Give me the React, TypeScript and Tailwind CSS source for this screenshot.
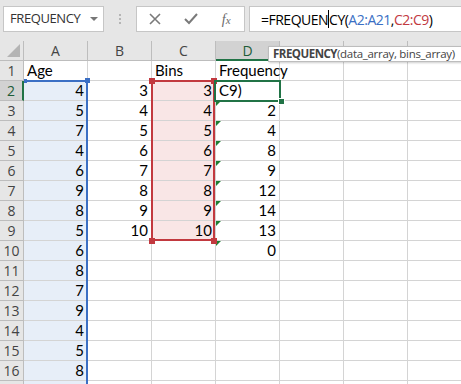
import React from "react"

const cols = ["A", "B", "C", "D", "E", "F", "G"]

// values by row (row 1..17), columns A..D
const colA = ["Age", "4", "5", "7", "4", "6", "9", "8", "5", "6", "8", "7", "9", "4", "5", "8", ""]
const colB = ["", "3", "4", "5", "6", "7", "8", "9", "10"]
const colC = ["Bins", "3", "4", "5", "6", "7", "8", "9", "10"]
const colD = ["Frequency", "C9)", "2", "4", "8", "9", "12", "14", "13", "0"]

const getCell = (row: number, col: number) => {
  const i = row - 1
  if (col === 0) return colA[i] ?? ""
  if (col === 1) return colB[i] ?? ""
  if (col === 2) return colC[i] ?? ""
  if (col === 3) return colD[i] ?? ""
  return ""
}

const Cell = ({ row, col }: { row: number; col: number }) => {
  const value = getCell(row, col)
  const isText = row === 1 || (row === 2 && col === 3)
  let bg = "bg-white"
  if (col === 0 && row >= 2) bg = "bg-[#e7eef8]"
  if (col === 2 && row >= 2 && row <= 9) bg = "bg-[#f9e6e6]"
  const hasFlag = col === 3 && row >= 3 && row <= 10
  return (
    <div
      className={`relative h-[20px] w-[64px] shrink-0 border-r border-b border-[#d4d4d4] ${bg} flex items-end px-[3px] text-[15px] leading-[19px] text-black ${isText ? "justify-start" : "justify-end"}`}
    >
      {hasFlag && (
        <div className="absolute left-0 top-0 w-0 h-0 border-t-[5px] border-t-[#1e7e34] border-r-[5px] border-r-transparent" />
      )}
      <span className="relative z-10 whitespace-nowrap">{value}</span>
    </div>
  )
}

export default function App() {
  const rows = Array.from({ length: 17 }, (_, i) => i + 1)

  return (
    <div
      className="relative w-[461px] h-[384px] overflow-hidden bg-white"
      style={{ fontFamily: "Lato, 'Noto Sans', sans-serif" }}
    >
      {/* top bar */}
      <div
        className="h-[41px] bg-[#e6e6e6] flex items-start pt-[6px] pl-[3px]"
        style={{ fontFamily: "'Open Sans', 'Noto Sans', sans-serif" }}
      >
        <div className="w-[101px] h-[26px] bg-white border border-[#c6c6c6] flex items-center justify-between pl-[6px] pr-[5px] text-[13px] tracking-[-0.4px] text-[#333]">
          <span>FREQUENCY</span>
          <div className="w-0 h-0 border-l-[4px] border-r-[4px] border-t-[4px] border-l-transparent border-r-transparent border-t-[#777]" />
        </div>
        <div className="w-[32px] h-[26px] flex flex-col items-center justify-center gap-[2px]">
          <div className="w-[2px] h-[2px] bg-[#b5b5b5]" />
          <div className="w-[2px] h-[2px] bg-[#b5b5b5]" />
          <div className="w-[2px] h-[2px] bg-[#b5b5b5]" />
        </div>
        <div className="w-[109px] h-[26px] bg-white border border-[#c6c6c6] flex items-center">
          <div className="w-[36px] flex justify-center">
            <svg width="12" height="12" viewBox="0 0 12 12">
              <path d="M1 1 L11 11 M11 1 L1 11" stroke="#7a7a7a" strokeWidth="1.6" fill="none" />
            </svg>
          </div>
          <div className="w-[36px] flex justify-center">
            <svg width="14" height="12" viewBox="0 0 14 12">
              <path d="M1 6 L5 10 L13 1" stroke="#7a7a7a" strokeWidth="2" fill="none" />
            </svg>
          </div>
          <div className="w-[36px] flex justify-center">
            <span className="italic text-[14px] text-[#6a6a6a]" style={{ fontFamily: "'Liberation Serif', serif" }}>
              f<span className="text-[11px]">x</span>
            </span>
          </div>
        </div>
        <div className="ml-[4px] flex-1 h-[26px] bg-white border border-[#c6c6c6] border-r-0 flex items-center pl-[11px] text-[14px] tracking-[-0.5px] text-black">
          <span>=FREQUEN</span>
          <span className="inline-block w-[1px] h-[18px] bg-black" />
          <span>CY(</span>
          <span className="text-[#3b6fc4]">A2:A21</span>
          <span>,</span>
          <span className="text-[#c2393f]">C2:C9</span>
          <span>)</span>
        </div>
      </div>

      {/* column header */}
      <div className="flex h-[20px] bg-[#e6e6e6] text-[14px] text-[#444]" style={{ fontFamily: "'Open Sans', 'Noto Sans', sans-serif" }}>
        <div className="relative w-[24px] h-[20px] shrink-0 border-r border-b border-[#bdbdbd]">
          <div className="absolute right-[3px] bottom-[3px] w-0 h-0 border-l-[13px] border-l-transparent border-b-[13px] border-b-[#b4b4b4]" />
        </div>
        {cols.map((c) => (
          <div
            key={c}
            className={`w-[64px] h-[20px] shrink-0 flex items-center justify-center border-r border-[#bdbdbd] ${c === "D" ? "bg-[#d2d2d2] border-b-2 border-b-[#217346] text-[#1d5c37]" : "border-b border-b-[#bdbdbd]"}`}
          >
            {c}
          </div>
        ))}
      </div>

      {/* rows */}
      {rows.map((r) => (
        <div key={r} className="flex">
          <div
            className={`w-[24px] h-[20px] shrink-0 flex items-center justify-center text-[14px] border-b border-[#bdbdbd] ${r === 2 ? "bg-[#d2d2d2] border-r-2 border-r-[#217346] text-[#1d5c37]" : "bg-[#e6e6e6] border-r border-r-[#bdbdbd] text-[#444]"}`}
            style={{ fontFamily: "'Open Sans', 'Noto Sans', sans-serif" }}
          >
            {r}
          </div>
          {cols.map((_, ci) => (
            <Cell key={ci} row={r} col={ci} />
          ))}
        </div>
      ))}

      {/* blue range A2:A21 */}
      <div className="absolute left-[24px] top-[80px] w-[64px] h-[2px] bg-[#3b6fc4]" />
      <div className="absolute left-[86px] top-[80px] w-[2px] h-[320px] bg-[#3b6fc4]" />
      <div className="absolute left-[85px] top-[78px] w-[5px] h-[5px] bg-[#3b6fc4]" />
      <div className="absolute left-[24px] top-[79px] w-[3px] h-[4px] bg-[#3b6fc4]" />

      {/* red range C2:C9 */}
      <div className="absolute left-[151px] top-[80px] w-[64px] h-[161px] border-2 border-[#c2393f]" />
      <div className="absolute left-[149px] top-[78px] w-[6px] h-[6px] bg-[#c2393f]" />
      <div className="absolute left-[211px] top-[78px] w-[6px] h-[6px] bg-[#c2393f]" />
      <div className="absolute left-[149px] top-[238px] w-[6px] h-[6px] bg-[#c2393f]" />
      <div className="absolute left-[211px] top-[238px] w-[6px] h-[6px] bg-[#c2393f]" />

      {/* active cell D2 */}
      <div className="absolute left-[214px] top-[80px] w-[67px] h-[22px] border-2 border-[#217346]" />
      <div className="absolute left-[278px] top-[98px] w-[5px] h-[5px] bg-[#217346] border border-white box-content" />

      {/* tooltip */}
      <div
        className="absolute z-20 left-[268px] top-[46px] w-[200px] h-[16px] bg-white border border-[#bdbdbd] shadow-[1px_1px_2px_rgba(0,0,0,0.2)] flex items-center pl-[4px] text-[11.5px] leading-[14px] text-[#444] whitespace-nowrap"
        style={{ fontFamily: "'Open Sans', 'Noto Sans', sans-serif" }}
      >
        <span className="font-bold tracking-[-0.5px]">FREQUENCY</span>
        <span className="tracking-[-0.3px]">(data_array, bins_array)</span>
      </div>
    </div>
  )
}
